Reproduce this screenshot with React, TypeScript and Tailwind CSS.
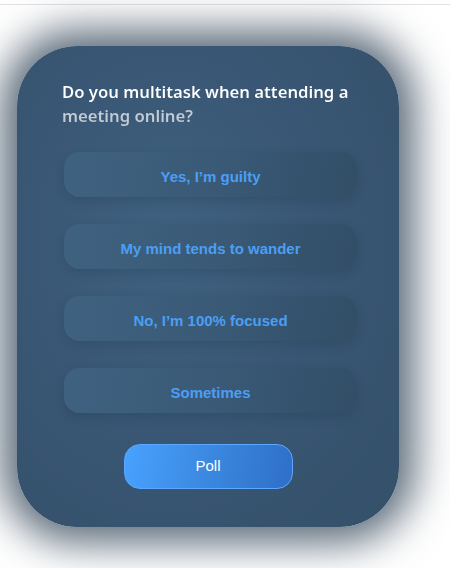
const options = ['Yes, I’m guilty', 'My mind tends to wander', 'No, I’m 100% focused', 'Sometimes'];

export default function App() {
  return (
    <div className="min-h-[568px] w-[450px] overflow-hidden bg-white">
      <div className="mt-[4px] h-px bg-[#e2e2e2]" />
      <div className="ml-[17px] mt-[41px] flex h-[481px] w-[382px] flex-col rounded-[60px] bg-[radial-gradient(ellipse_at_40%_40%,#3f6180_0%,#385572_55%,#345069_100%)] pt-[34px] shadow-[0_0_40px_16px_rgba(35,55,75,0.75)]">
        <h1 className="ml-[45px] w-[300px] bg-[linear-gradient(180deg,#ffffff_45%,#c3cbd3_60%)] bg-clip-text font-['Noto_Sans',sans-serif] text-[16.7px] font-semibold leading-[24px] text-transparent">
          Do you multitask when attending a meeting online?
        </h1>
        <div className="ml-[47px] mt-[24px] flex w-[293px] flex-col gap-[27px]">
          {options.map((o) => (
            <button
              key={o}
              className="flex h-[45px] items-center justify-center rounded-[16px] bg-[linear-gradient(100deg,#3f6280_0%,#3a5a77_50%,#324e67_100%)] pt-[6px] font-['Liberation_Sans',Arial,sans-serif] text-[15px] font-bold text-[#4a9ff5] shadow-[0_4px_10px_rgba(30,50,70,0.25)]"
            >
              {o}
            </button>
          ))}
        </div>
        <button className="mx-auto mt-[31px] flex h-[45px] w-[169px] items-center justify-center rounded-[16px] border border-[#5aa8ff] bg-[linear-gradient(100deg,#48a2ff_0%,#3b88e0_50%,#2f6fc8_100%)] font-['Liberation_Sans',Arial,sans-serif] text-[15px] text-white">
          Poll
        </button>
      </div>
    </div>
  );
}
